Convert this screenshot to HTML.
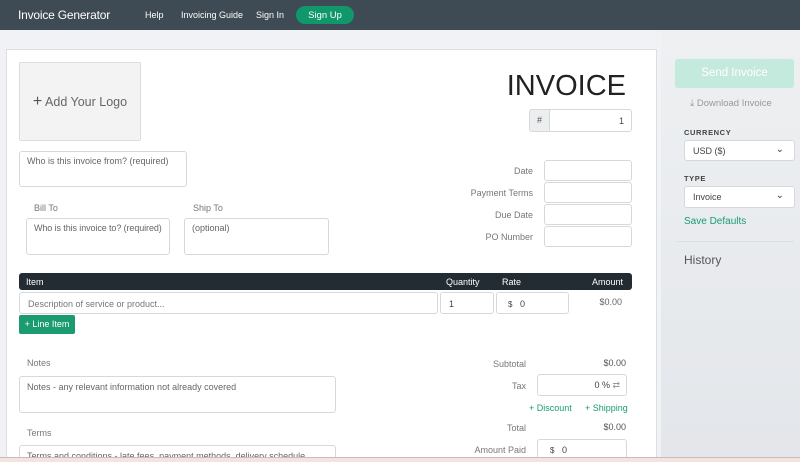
<!DOCTYPE html>
<html style="width:800px;height:462px;overflow:hidden"><head><style>
*{box-sizing:border-box;margin:0;padding:0}
body{width:800px;height:462px;overflow:hidden;background:#f1f2f5;font-family:"Liberation Sans",sans-serif;position:relative;color:#555}
.a{position:absolute}
.in{position:absolute;background:#fff;border:1px solid #d6d9dc;border-radius:3px;font-size:9px;color:#666;padding:4px 7px;white-space:nowrap;overflow:hidden}
.lbl{position:absolute;font-size:9px;color:#777}
.r{text-align:right}
.g{color:#1a9c70}
</style></head><body>
<div class="a" style="left:0;top:0;width:800px;height:30px;background:#3e4a54"></div>
<div class="a" style="left:18px;top:8px;font-size:12px;color:#fff;letter-spacing:-0.2px">Invoice Generator</div>
<div class="a" style="left:145px;top:10px;font-size:9px;color:#fff">Help</div>
<div class="a" style="left:181px;top:10px;font-size:9px;color:#fff">Invoicing Guide</div>
<div class="a" style="left:256px;top:10px;font-size:9px;color:#fff">Sign In</div>
<div class="a" style="left:296px;top:6px;width:58px;height:18px;border-radius:9px;background:#11976c;color:#fff;font-size:9.5px;text-align:center;line-height:19px">Sign Up</div>

<div class="a" style="left:661px;top:30px;width:139px;height:432px;background:linear-gradient(#eef0f2,#e3e6ea)"></div>
<div class="a" style="left:6px;top:49px;width:651px;height:420px;background:#fff;border:1px solid #dcdee0"></div>

<div class="a" style="left:19px;top:62px;width:122px;height:79px;background:#f3f3f3;border:1px solid #ddd;border-radius:2px;font-size:12.5px;color:#666;text-align:center;line-height:77px"><span style="font-size:16px;color:#555">+</span> Add Your Logo</div>
<div class="in" style="left:19px;top:151px;width:168px;height:36px">Who is this invoice from? (required)</div>
<div class="lbl" style="left:34px;top:203px">Bill To</div>
<div class="lbl" style="left:193px;top:203px">Ship To</div>
<div class="in" style="left:26px;top:218px;width:144px;height:37px;letter-spacing:-0.1px">Who is this invoice to? (required)</div>
<div class="in" style="left:184px;top:218px;width:145px;height:37px">(optional)</div>

<div class="a r" style="left:450px;top:70px;width:176px;font-size:29px;color:#222">INVOICE</div>
<div class="a" style="left:529px;top:109px;width:103px;height:23px;border:1px solid #d6d9dc;border-radius:3px;background:#fff"></div>
<div class="a" style="left:529px;top:109px;width:21px;height:23px;background:#eceeef;border:1px solid #d6d9dc;border-radius:3px 0 0 3px;font-size:9px;text-align:center;line-height:21px">#</div>
<div class="a r" style="left:560px;top:116px;width:64px;font-size:9px;color:#444">1</div>

<div class="lbl r" style="left:433px;top:166px;width:100px">Date</div>
<div class="lbl r" style="left:433px;top:188px;width:100px">Payment Terms</div>
<div class="lbl r" style="left:433px;top:210px;width:100px">Due Date</div>
<div class="lbl r" style="left:433px;top:232px;width:100px">PO Number</div>
<div class="in" style="left:544px;top:160px;width:88px;height:21px"></div>
<div class="in" style="left:544px;top:182px;width:88px;height:21px"></div>
<div class="in" style="left:544px;top:204px;width:88px;height:21px"></div>
<div class="in" style="left:544px;top:226px;width:88px;height:21px"></div>

<div class="a" style="left:19px;top:273px;width:613px;height:17px;background:#232b33;border-radius:3px"></div>
<div class="a" style="left:26px;top:277px;font-size:9px;color:#fff">Item</div>
<div class="a" style="left:446px;top:277px;font-size:9px;color:#fff">Quantity</div>
<div class="a" style="left:502px;top:277px;font-size:9px;color:#fff">Rate</div>
<div class="a r" style="left:560px;top:277px;width:63px;font-size:9px;color:#fff">Amount</div>
<div class="in" style="left:19px;top:292px;width:419px;height:22px;padding:6px 8px;color:#777">Description of service or product...</div>
<div class="in" style="left:440px;top:292px;width:54px;height:22px;padding:6px 8px;color:#444">1</div>
<div class="in" style="left:496px;top:292px;width:73px;height:22px;padding:6px 11px;color:#444"><span style="font-size:8px">$</span>&nbsp;&nbsp;&nbsp;0</div>
<div class="a r" style="left:570px;top:297px;width:52px;font-size:9px;color:#666">$0.00</div>
<div class="a" style="left:19px;top:315px;width:56px;height:19px;background:#1a9c70;border-radius:2px;color:#fff;font-size:9px;text-align:center;line-height:19px">+ Line Item</div>

<div class="lbl" style="left:27px;top:358px">Notes</div>
<div class="in" style="left:19px;top:376px;width:317px;height:37px;padding:5px 7px">Notes - any relevant information not already covered</div>
<div class="lbl" style="left:27px;top:428px">Terms</div>
<div class="in" style="left:19px;top:445px;width:317px;height:30px;padding:5px 7px">Terms and conditions - late fees, payment methods, delivery schedule</div>

<div class="lbl r" style="left:426px;top:359px;width:100px">Subtotal</div>
<div class="a r" style="left:570px;top:358px;width:56px;font-size:9px;color:#555">$0.00</div>
<div class="lbl r" style="left:426px;top:381px;width:100px">Tax</div>
<div class="in r" style="left:537px;top:374px;width:90px;height:22px;padding:5px 6px;color:#444">0 % <span style="color:#999">⇄</span></div>
<div class="a g" style="left:529px;top:403px;font-size:9px">+ Discount</div>
<div class="a g" style="left:585px;top:403px;font-size:9px">+ Shipping</div>
<div class="lbl r" style="left:426px;top:423px;width:100px">Total</div>
<div class="a r" style="left:570px;top:422px;width:56px;font-size:9px;color:#555">$0.00</div>
<div class="lbl r" style="left:426px;top:445px;width:100px">Amount Paid</div>
<div class="in" style="left:537px;top:439px;width:90px;height:30px;padding:5px 12px;color:#444"><span style="font-size:8px">$</span>&nbsp;&nbsp;&nbsp;0</div>

<div class="a" style="left:675px;top:59px;width:119px;height:29px;background:#c4e9dd;border-radius:3px;color:#fff;font-size:11.5px;text-align:center;line-height:29px">Send Invoice</div>
<div class="a" style="left:690px;top:98px;font-size:9.5px;color:#999">⤓ Download Invoice</div>
<div class="a" style="left:684px;top:128px;font-size:7.5px;color:#444;font-weight:bold;letter-spacing:0.6px">CURRENCY</div>
<div class="in" style="left:684px;top:140px;width:111px;height:21px;padding:5px 8px;color:#444">USD ($)<span style="position:absolute;right:10px;top:3px;font-size:10px">⌄</span></div>
<div class="a" style="left:684px;top:174px;font-size:7.5px;color:#444;font-weight:bold;letter-spacing:0.6px">TYPE</div>
<div class="in" style="left:684px;top:186px;width:111px;height:22px;padding:5px 8px;color:#444">Invoice<span style="position:absolute;right:10px;top:3px;font-size:10px">⌄</span></div>
<div class="a g" style="left:684px;top:216px;font-size:10px">Save Defaults</div>
<div class="a" style="left:677px;top:241px;width:117px;height:1px;background:#dcdfe2"></div>
<div class="a" style="left:684px;top:253px;font-size:12px;color:#555">History</div>

<div class="a" style="left:0;top:457px;width:800px;height:20px;background:#f4e3df;border-top:1px solid #c8bcbc"></div>
</body></html>
